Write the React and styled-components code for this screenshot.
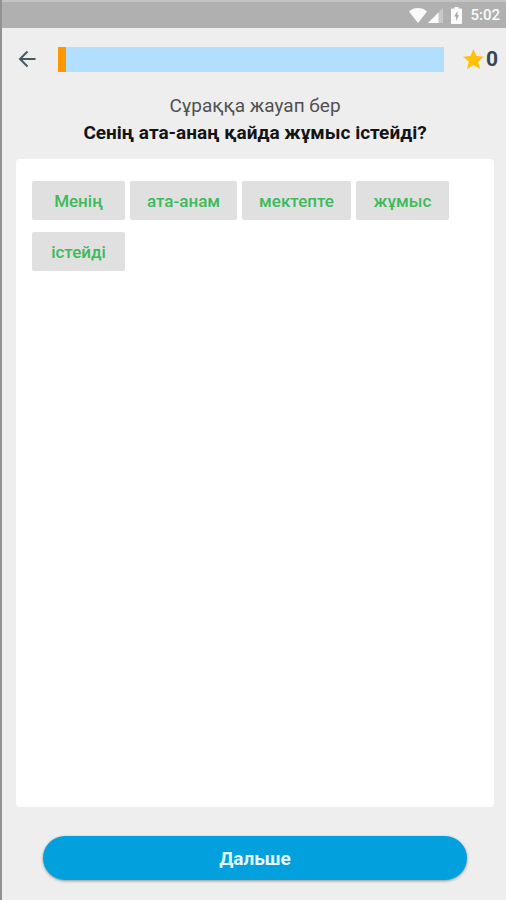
import React, { useState } from 'react'
import styled, { createGlobalStyle } from 'styled-components'

const GlobalStyle = createGlobalStyle`
    * {
        box-sizing: border-box;
    }

    body {
        margin: 0;
        font-family: Roboto, 'Noto Sans', sans-serif;
        background-color: #eeeeee;
    }

    button {
        font-family: inherit;
        border: none;
        cursor: pointer;
    }
`

const Screen = styled.div`
    display: flex;
    flex-direction: column;
    min-height: 100vh;
    border-left: 2px solid #929292;
    background-color: #eeeeee;
`

const StatusBar = styled.div`
    display: flex;
    align-items: center;
    justify-content: flex-end;
    gap: 8px;
    height: 28px;
    padding: 0 6px 0 0;
    border-top: 2px solid #c4c4c4;
    background-color: #b0b0b0;
    color: #fafafa;
    font-size: 15px;
    font-weight: 500;

    svg {
        display: block;
    }
`

const Network = styled.div`
    display: flex;
    gap: 1px;
`

const Header = styled.header`
    display: flex;
    align-items: center;
    height: 62px;
    padding: 0 8px 0 13px;
`

const BackButton = styled.button`
    display: flex;
    padding: 0;
    background: none;
    color: #455a64;
`

const Progress = styled.div`
    flex: 1;
    height: 25px;
    margin: 0 19px;
    background-color: #b3dffe;
`

const ProgressFill = styled.div`
    height: 100%;
    background-color: #ff9800;
`

const Score = styled.div`
    display: flex;
    align-items: center;
    gap: 2px;
    color: #37474f;
    font-size: 21px;
    font-weight: 700;
`

const Question = styled.div`
    padding: 2px 14px 13px 16px;
    text-align: center;
    font-size: 19px;
    line-height: 27px;

    p {
        margin: 0;
        color: #505050;
    }

    h1 {
        margin: 0;
        color: #141414;
        font-size: 19px;
        font-weight: 700;
    }
`

const Card = styled.main`
    flex: 1;
    display: flex;
    flex-wrap: wrap;
    align-content: flex-start;
    gap: 12px 5px;
    margin: 0 12px 0 14px;
    padding: 22px 16px;
    border-radius: 4px;
    background-color: #fff;
`

const Word = styled.button`
    min-width: 93px;
    height: 39px;
    padding: 0 17px;
    border-radius: 2px;
    background-color: #e0e0e0;
    color: #3cba5c;
    font-size: 17px;
    font-weight: 500;
`

const Footer = styled.footer`
    display: flex;
    padding: 29px 39px 20px 41px;
`

const NextButton = styled.button`
    flex: 1;
    height: 44px;
    border-radius: 22px;
    background-color: #02a0dd;
    box-shadow: 0 1px 3px rgba(0, 0, 0, .4);
    color: #e6f8ff;
    font-size: 19px;
    font-weight: 700;
`

const WifiIcon = () => (
    <svg width="18" height="15" viewBox="0 0 19 15" preserveAspectRatio="none" fill="currentColor" aria-hidden="true">
        <path d="M9.5 15 0 3.400C2.600 1.200 5.900 0 9.500 0s6.900 1.200 9.500 3.400z" />
    </svg>
)

const SignalIcon = () => (
    <svg width="15" height="15" viewBox="0 0 15 15" aria-hidden="true">
        <path d="M15 0v15H0z" fill="#fff" fillOpacity=".3" />
        <path d="M10.500 4.500V15H0z" fill="currentColor" />
    </svg>
)

const BatteryIcon = () => (
    <svg width="11" height="17" viewBox="0 0 11 17" aria-hidden="true">
        <path d="M3.500 0h4v1.500H10q1 0 1 1V16q0 1-1 1H1q-1 0-1-1V2.500q0-1 1-1h2.500z" fill="currentColor" />
        <path d="M6.500 4 3.200 9.500h1.900V14L8 8.300H6.500z" fill="#a8a8a8" />
    </svg>
)

const ArrowIcon = () => (
    <svg width="24" height="24" viewBox="0 0 24 24" fill="none" stroke="currentColor" strokeWidth="2" aria-hidden="true">
        <path d="M20.500 12H5M12.500 4.500 5 12l7.500 7.500" />
    </svg>
)

const StarIcon = () => (
    <svg width="21" height="20" viewBox="2 2 20 19" fill="#ffc107" aria-hidden="true">
        <path d="M12 17.270 18.180 21l-1.640-7.030L22 9.240l-7.190-.610L12 2 9.190 8.630 2 9.240l5.460 4.730L5.820 21z" />
    </svg>
)

const words = ['Менің', 'ата-анам', 'мектепте', 'жұмыс', 'істейді']

const App = () => {
    const [progress, setProgress] = useState(2)

    return (
        <>
            <GlobalStyle />
            <Screen>
                <StatusBar>
                    <Network>
                        <WifiIcon />
                        <SignalIcon />
                    </Network>
                    <BatteryIcon />
                    <time>5:02</time>
                </StatusBar>

                <Header>
                    <BackButton type="button" aria-label="Назад"><ArrowIcon /></BackButton>
                    <Progress role="progressbar" aria-label="Прогресс" aria-valuenow={progress} aria-valuemin="0" aria-valuemax="100">
                        <ProgressFill style={{ width: `${progress}%` }} />
                    </Progress>
                    <Score><StarIcon />0</Score>
                </Header>

                <Question>
                    <p>Сұраққа жауап бер</p>
                    <h1>Сенің ата-анаң қайда жұмыс істейді?</h1>
                </Question>

                <Card>
                    {words.map(word => <Word key={word} type="button">{word}</Word>)}
                </Card>

                <Footer>
                    <NextButton type="button" onClick={() => setProgress(Math.min(progress + 2, 100))}>Дальше</NextButton>
                </Footer>
            </Screen>
        </>
    )
}

export default App
